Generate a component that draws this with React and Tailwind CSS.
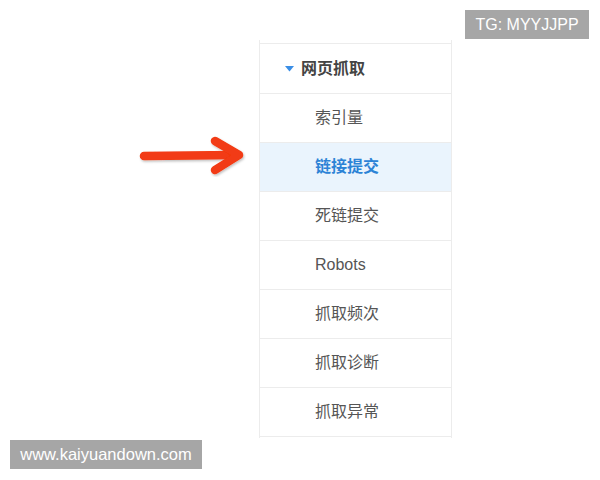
import React from 'react';

const items = ['索引量', '链接提交', '死链提交', 'Robots', '抓取频次', '抓取诊断', '抓取异常'];

function Arrow() {
  return (
    <svg width="110" height="44" viewBox="0 0 110 44" className="shrink-0 mt-[93px]">
      <defs>
        <filter id="sh" x="-10%" y="-30%" width="120%" height="160%">
          <feDropShadow dx="1" dy="1.5" stdDeviation="1.2" floodColor="#000" floodOpacity="0.25" />
        </filter>
      </defs>
      <g filter="url(#sh)" stroke="#f23a12" strokeWidth="8.5" strokeLinecap="round" strokeLinejoin="round" fill="none">
        <path d="M8 23 L100 22" />
        <path d="M79 8 L103 22 L79 37" />
      </g>
    </svg>
  );
}

export default function App() {
  return (
    <div
      className="relative w-[600px] h-[480px] bg-white overflow-hidden"
      style={{ fontFamily: '"Liberation Sans", "Noto Sans CJK SC", sans-serif' }}
    >
      <div className="flex items-start pt-[40px] pl-[136px] gap-[13px]">
        <Arrow />
        <div className="w-[193px] border-x border-[#ececec]">
          <div className="h-[3px]" />
          <div className="h-[50px] border-t border-[#ececec] flex items-center pl-[25px] gap-[7px]">
            <svg width="9" height="6" viewBox="0 0 9 6">
              <path d="M0 0 H9 L4.5 5.5 Z" fill="#3a8ee6" />
            </svg>
            <span className="text-[16px] font-bold text-[#444]">网页抓取</span>
          </div>
          {items.map((t) => {
            const active = t === '链接提交';
            return (
              <div
                key={t}
                className={`h-[49px] border-t border-[#ececec] flex items-center pl-[55px] text-[16px] ${
                  active ? 'bg-[#eaf4fd] text-[#2c83d6] font-bold' : 'text-[#555]'
                }`}
              >
                {t}
              </div>
            );
          })}
          <div className="h-[2px] border-t border-[#ececec]" />
        </div>
      </div>

      <div className="absolute left-[465px] top-[10px] w-[124px] h-[29px] bg-[#a6a6a6] text-white text-[16px] flex items-center justify-center">
        TG: MYYJJPP
      </div>
      <div className="absolute left-[10px] top-[440px] w-[192px] h-[29px] bg-[#a6a6a6] text-white text-[16.5px] flex items-center justify-center">
        www.kaiyuandown.com
      </div>
    </div>
  );
}
